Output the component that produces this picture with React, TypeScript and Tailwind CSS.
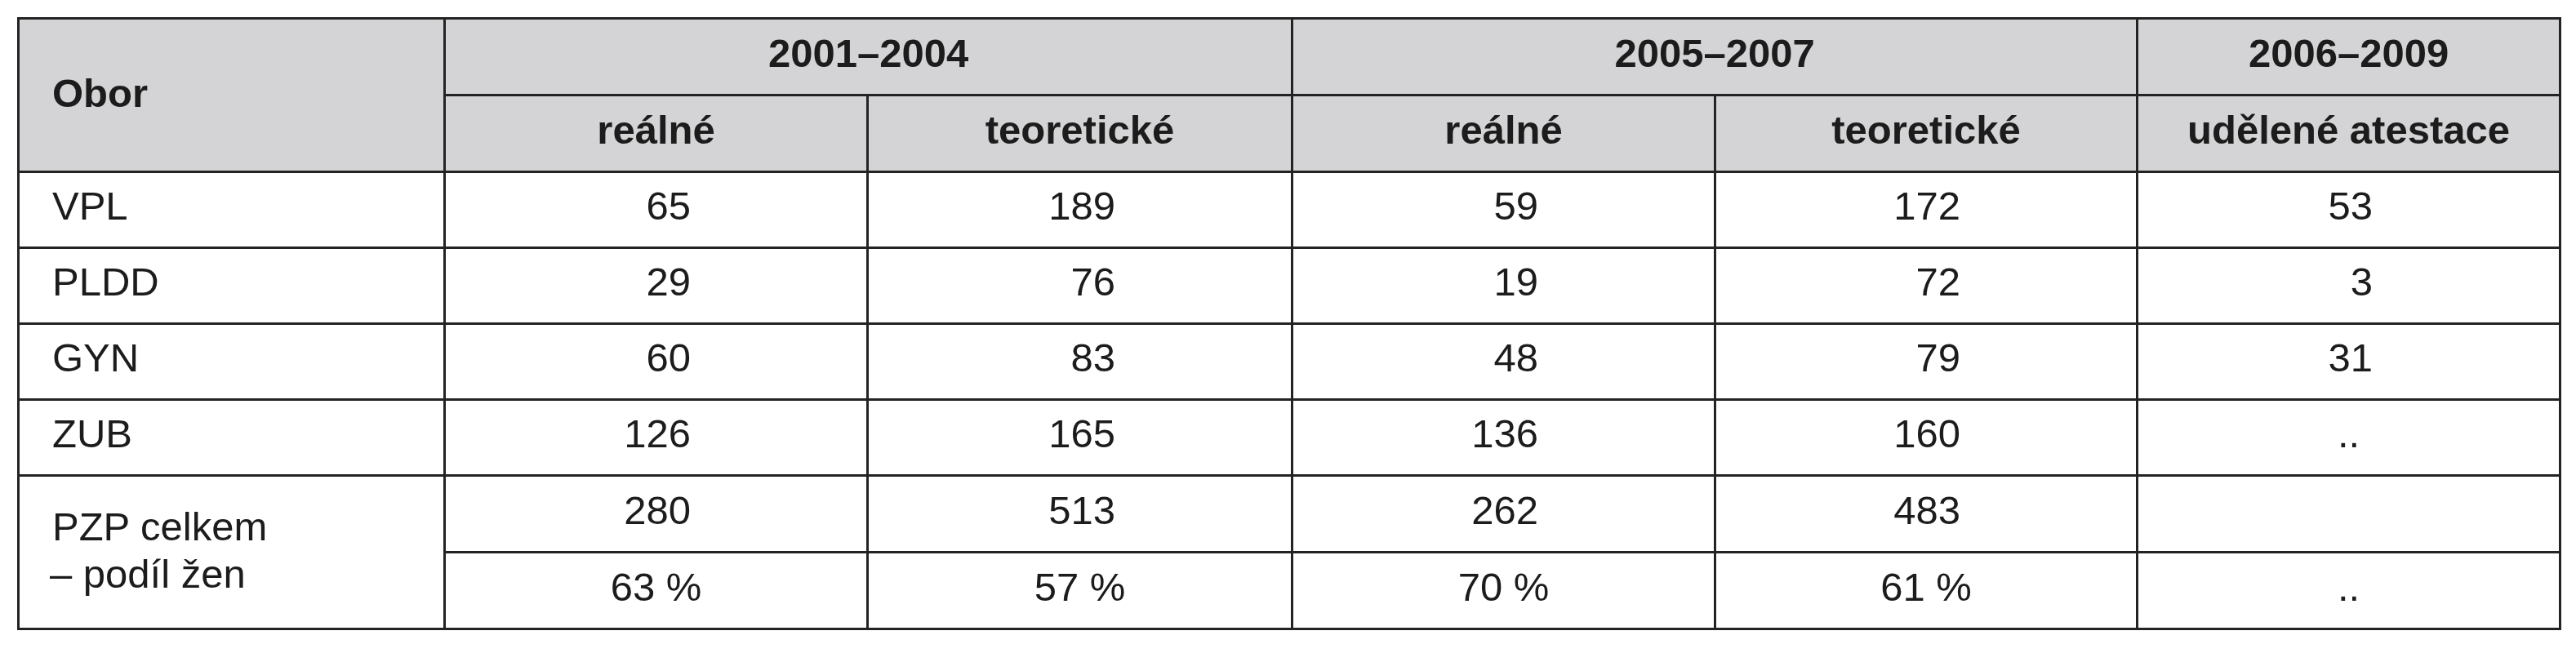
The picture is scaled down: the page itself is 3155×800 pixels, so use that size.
import React from "react";

type Cell = { v: string; kind: "num" | "num6" | "mid" };

const rows: { label: string; cells: Cell[] }[] = [
  {
    label: "VPL",
    cells: [
      { v: "65", kind: "num" },
      { v: "189", kind: "num" },
      { v: "59", kind: "num" },
      { v: "172", kind: "num" },
      { v: "53", kind: "num6" },
    ],
  },
  {
    label: "PLDD",
    cells: [
      { v: "29", kind: "num" },
      { v: "76", kind: "num" },
      { v: "19", kind: "num" },
      { v: "72", kind: "num" },
      { v: "3", kind: "num6" },
    ],
  },
  {
    label: "GYN",
    cells: [
      { v: "60", kind: "num" },
      { v: "83", kind: "num" },
      { v: "48", kind: "num" },
      { v: "79", kind: "num" },
      { v: "31", kind: "num6" },
    ],
  },
  {
    label: "ZUB",
    cells: [
      { v: "126", kind: "num" },
      { v: "165", kind: "num" },
      { v: "136", kind: "num" },
      { v: "160", kind: "num" },
      { v: "..", kind: "mid" },
    ],
  },
];

const totals: Cell[] = [
  { v: "280", kind: "num" },
  { v: "513", kind: "num" },
  { v: "262", kind: "num" },
  { v: "483", kind: "num" },
  { v: "", kind: "mid" },
];

const shares: Cell[] = [
  { v: "63 %", kind: "mid" },
  { v: "57 %", kind: "mid" },
  { v: "70 %", kind: "mid" },
  { v: "61 %", kind: "mid" },
  { v: "..", kind: "mid" },
];

const line = "border-[3px] border-[#232323]";

const ValueCell = ({ cell }: { cell: Cell }) => {
  const align =
    cell.kind === "num"
      ? "text-right pr-[215px]"
      : cell.kind === "num6"
        ? "text-right pr-[228px]"
        : "text-center";
  return <td className={`${line} ${align} pb-[9px] align-middle`}>{cell.v}</td>;
};

const App = () => {
  return (
    <div className="bg-white w-[3155px] h-[800px] pt-[21px] pl-[21px] font-['Liberation_Sans',Arial,sans-serif] text-[#1c1c1c]">
      <table className="table-fixed border-collapse w-[3113px] text-[49px] leading-none">
        <colgroup>
          <col className="w-[522px]" />
          <col className="w-[518px]" />
          <col className="w-[520px]" />
          <col className="w-[518px]" />
          <col className="w-[517px]" />
          <col className="w-[518px]" />
        </colgroup>
        <thead className="bg-[#d4d4d6] font-bold">
          <tr className="h-[94px]">
            <th rowSpan={2} className={`${line} text-left pl-[40px] pb-[5px] align-middle font-bold`}>
              Obor
            </th>
            <th colSpan={2} className={`${line} text-center pb-[9px] align-middle font-bold`}>
              2001–2004
            </th>
            <th colSpan={2} className={`${line} text-center pb-[9px] align-middle font-bold`}>
              2005–2007
            </th>
            <th className={`${line} text-center pb-[9px] align-middle font-bold`}>2006–2009</th>
          </tr>
          <tr className="h-[94px]">
            <th className={`${line} text-center pb-[9px] align-middle font-bold`}>reálné</th>
            <th className={`${line} text-center pb-[9px] align-middle font-bold`}>teoretické</th>
            <th className={`${line} text-center pb-[9px] align-middle font-bold`}>reálné</th>
            <th className={`${line} text-center pb-[9px] align-middle font-bold`}>teoretické</th>
            <th className={`${line} text-center pb-[9px] align-middle font-bold`}>udělené atestace</th>
          </tr>
        </thead>
        <tbody>
          {rows.map((row) => (
            <tr key={row.label} className="h-[93px]">
              <td className={`${line} text-left pl-[40px] pb-[9px] align-middle`}>{row.label}</td>
              {row.cells.map((c, i) => (
                <ValueCell key={i} cell={c} />
              ))}
            </tr>
          ))}
          <tr className="h-[94px]">
            <td rowSpan={2} className={`${line} text-left pl-[40px] pb-[6px] align-middle leading-[58px]`}>
              <div>PZP celkem</div>
              <div className="-ml-[3px]">– podíl žen</div>
            </td>
            {totals.map((c, i) => (
              <ValueCell key={i} cell={c} />
            ))}
          </tr>
          <tr className="h-[94px]">
            {shares.map((c, i) => (
              <ValueCell key={i} cell={c} />
            ))}
          </tr>
        </tbody>
      </table>
    </div>
  );
};

export default App;
